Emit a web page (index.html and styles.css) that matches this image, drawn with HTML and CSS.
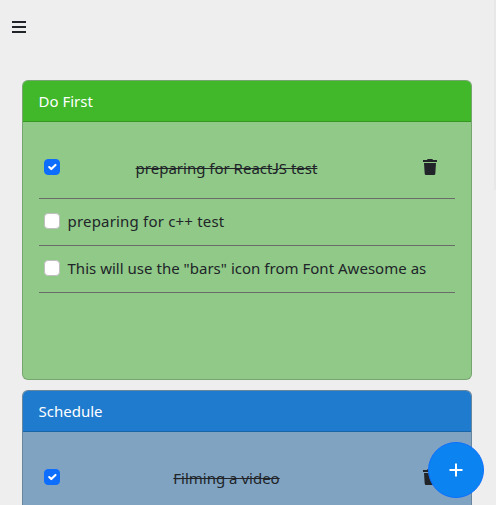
FILE: index.html
```html
<!DOCTYPE html>
<html lang="en">
<head>
<meta charset="utf-8">
<title>Tasks</title>
<link rel="stylesheet" href="styles.css">
</head>
<body>
<nav class="topbar">
  <svg class="bars" width="14" height="12" viewBox="0 0 14 12"><path d="M0 1h14M0 6h14M0 11h14"/></svg>
</nav>
<main class="board">
  <section class="card first">
    <header class="card-header">Do First</header>
    <div class="card-body">
      <div class="task done">
        <span class="check on"><svg viewBox="0 0 20 20"><path d="m6 10 3 3 6-6"/></svg></span>
        <span class="label">preparing for React<span class="cap">J</span>S test</span>
        <svg class="trash" viewBox="0 0 14 16"><path d="M4.7 0h4.6l.7 1h4v2H0V1h4zM1 4h12l-.7 10.7a1.4 1.4 0 0 1-1.4 1.3H3.1a1.4 1.4 0 0 1-1.4-1.3z"/></svg>
      </div>
      <div class="task"><span class="check"></span><span class="label t-cpp">preparing for c++ test</span></div>
      <div class="task"><span class="check"></span><span class="label t-long">This will use the "bars" icon from Font Awesome as</span></div>
    </div>
  </section>
  <section class="card schedule">
    <header class="card-header">Schedule</header>
    <div class="card-body">
      <div class="task done">
        <span class="check on"><svg viewBox="0 0 20 20"><path d="m6 10 3 3 6-6"/></svg></span>
        <span class="label">Filming a video</span>
        <svg class="trash" viewBox="0 0 14 16"><path d="M4.7 0h4.6l.7 1h4v2H0V1h4zM1 4h12l-.7 10.7a1.4 1.4 0 0 1-1.4 1.3H3.1a1.4 1.4 0 0 1-1.4-1.3z"/></svg>
      </div>
    </div>
  </section>
</main>
<button class="add" aria-label="Add"><svg width="14" height="14" viewBox="0 0 14 14"><path d="M7 .5v13M.5 7h13"/></svg></button>
<div class="scroll-thumb"></div>
</body>
</html>
```
FILE: styles.css
```css
* { box-sizing: border-box; }
html { overflow: hidden; }
body {
  margin: 0;
  height: 505px;
  overflow: hidden;
  background: #eee;
  color: #212529;
  font: 15px/24px "Noto Sans", "Open Sans", sans-serif;
}
.topbar { height: 80px; padding: 21px 12px; }
.bars { display: block; fill: none; stroke: #212529; stroke-width: 2; }
.board { display: flex; flex-direction: column; gap: 10px; height: 425px; overflow: hidden; padding: 0 24px 0 22px; }
.card {
  flex: none;
  height: 300px;
  border: 1px solid rgba(0, 0, 0, .176);
  border-radius: 6px;
}
.first { background-color: #90c988; }
.schedule { height: 115px; overflow: hidden; border-bottom: 0; border-radius: 6px 6px 0 0; background-color: #80a3c2; }
.card-header {
  height: 41px;
  padding: 8px 15.5px;
  border-bottom: 1px solid rgba(0, 0, 0, .176);
  border-radius: 5px 5px 0 0;
  color: #fff;
}
.first .card-header { background: #40b829; }
.schedule .card-header { background: #1f7bcd; }
.card-body { padding: 16px; }
.task {
  display: flex;
  align-items: center;
  height: 47px;
  padding: 0 5px 2px;
  border-bottom: 1px solid #6b6b6b;
}
.done { height: 61px; padding: 0 18px 0 5px; justify-content: space-between; }
.done .check, .done .trash { margin-bottom: 2px; }
.check {
  flex: none;
  width: 16px;
  height: 16px;
  border: 1px solid #bfbfbf;
  border-radius: 4px;
  background: #fff;
}
.check.on { border-color: #0d6efd; background: #0d6efd; }
.check svg { display: block; width: 14px; height: 14px; fill: none; stroke: #fff; stroke-width: 3; stroke-linecap: round; stroke-linejoin: round; }
.label { white-space: nowrap; }
.task:not(.done) .label { margin-left: 7.5px; }
.done .label { margin-right: 30px; text-decoration: line-through; }
.cap { font-family: Lato, sans-serif; line-height: 1; }
.t-cpp { letter-spacing: .19px; }
.t-long { letter-spacing: .02px; }
.trash { width: 14px; height: 16px; fill: #212529; }
.add {
  position: fixed;
  left: 428px;
  top: 442px;
  display: flex;
  align-items: center;
  justify-content: center;
  width: 56px;
  height: 56px;
  padding: 0;
  border: 1px solid #0d6efd;
  border-radius: 50%;
  background: #0b84f1;
}
.add svg { fill: none; stroke: #fff; stroke-width: 2; }
.scroll-thumb { position: fixed; top: 0; right: 0; width: 2px; height: 190px; background: #e8e8e8; }
```
